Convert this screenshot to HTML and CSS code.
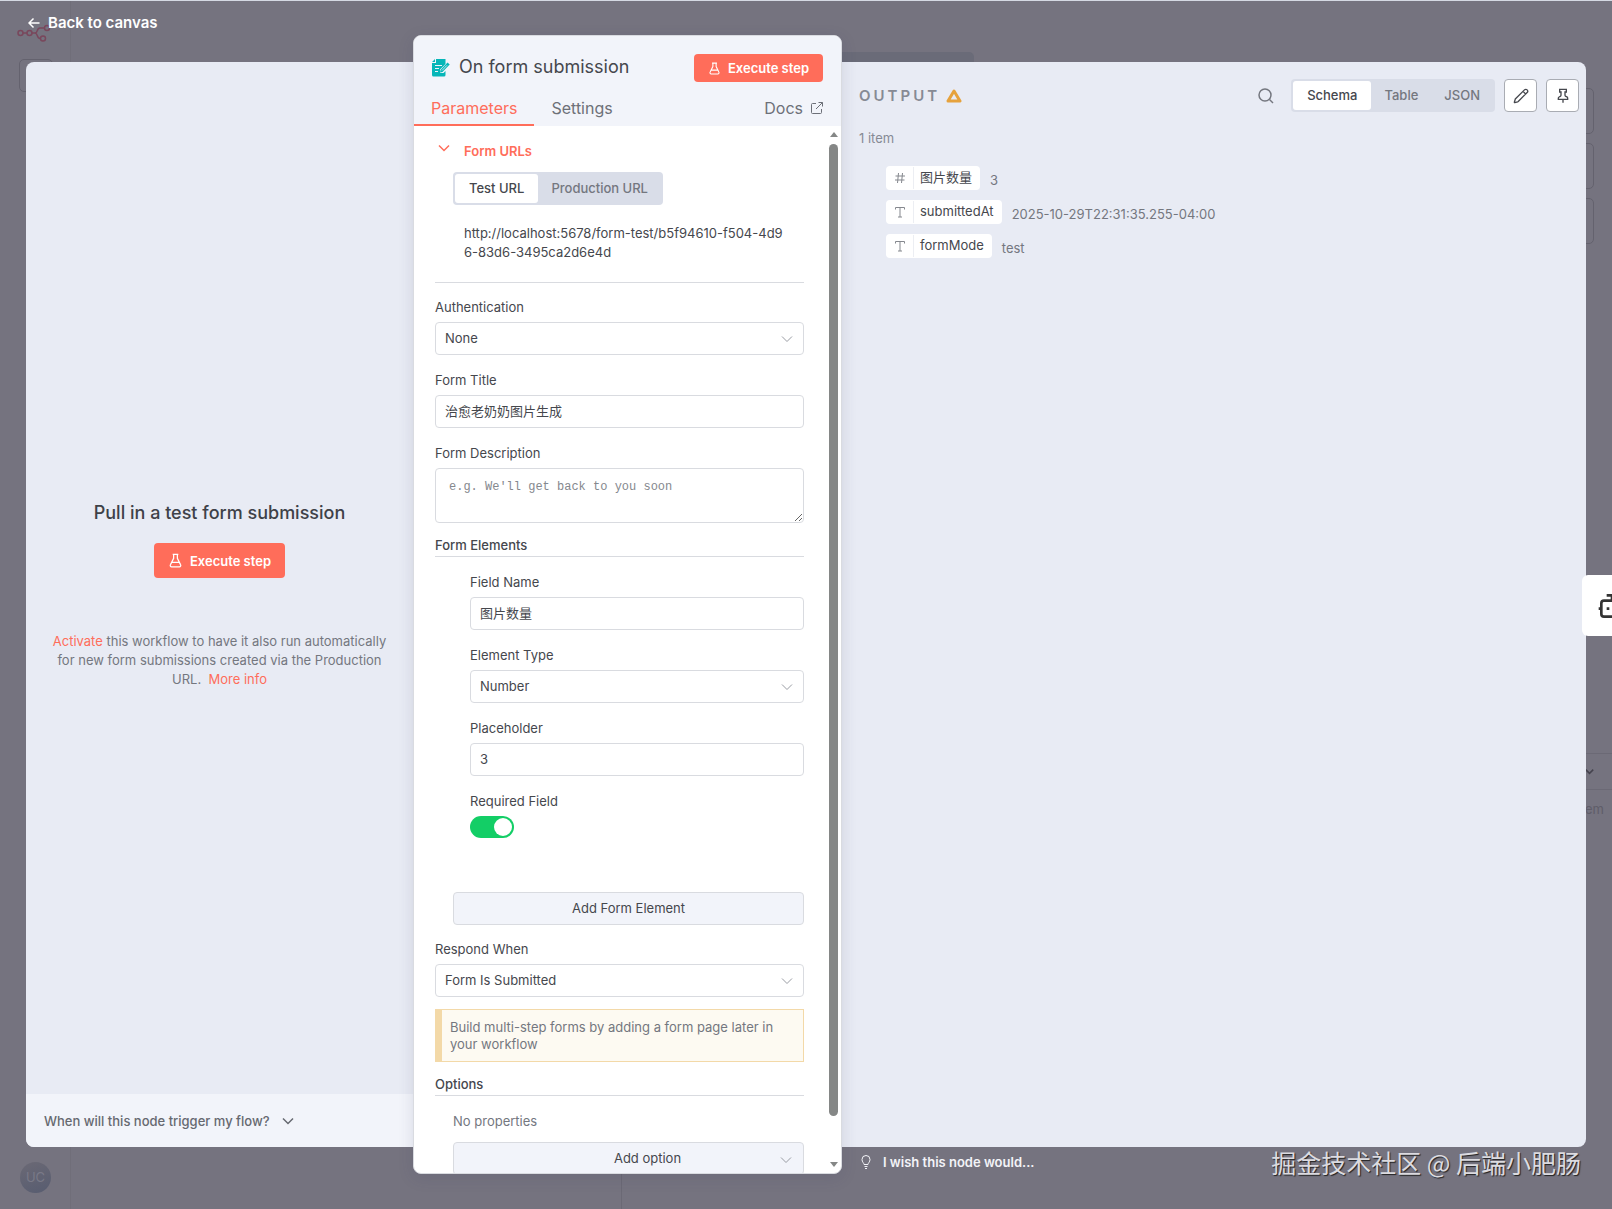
FILE: index.html
```html
<!DOCTYPE html>
<html lang="en">
<head>
<meta charset="utf-8">
<meta name="viewport" content="width=device-width, initial-scale=1">
<title>On form submission</title>
<link rel="stylesheet" href="styles.css">
</head>
<body>
<!-- Shared icon shapes -->
<svg class="sprite" aria-hidden="true">
  <symbol id="flask" viewBox="0 0 24 24"><path d="M9 2v6.500L4 18.500A2.200 2.200 0 0 0 6 22h12a2.200 2.200 0 0 0 2-3.500L15 8.500V2M7.500 2h9M6.500 15h11"/></symbol>
  <symbol id="chevron" viewBox="0 0 12 12"><path d="M1 3.500l5 5 5-5"/></symbol>
</svg>

<!-- Dimmed workflow canvas behind the dialog -->
<div class="canvas" aria-hidden="true">
  <div class="rail"></div>
  <svg class="logo" viewBox="0 0 34 18"><g fill="none" stroke="currentColor" stroke-width="1.500"><circle cx="3.500" cy="9" r="2.500"/><circle cx="12.500" cy="9" r="2.500"/><circle cx="30" cy="4" r="2.500"/><circle cx="26" cy="14.500" r="2.500"/><path d="M6 9h4M15 9h3c3 0 1.500-5 5-5h4.500M18 9c3 0 1.500 5.500 5 5.500"/></g></svg>
  <div class="box box-nav"></div>
  <div class="box box-tabs"></div>
  <div class="box box-a"></div>
  <div class="box box-b"></div>
  <div class="box box-c"></div>
  <div class="logs"><svg class="logs-tick" viewBox="0 0 12 12"><use href="#chevron"/></svg></div>
  <span class="logs-text">em</span>
  <div class="split"></div>
  <span class="avatar">UC</span>
</div>

<div class="stage">
  <header class="topbar">
    <a class="back" href="#"><svg viewBox="0 0 12 12"><path d="M11.500 6H1M5.500 1.500L1 6l4.500 4.500"/></svg>Back to canvas</a>
  </header>

  <section class="panel input-panel">
    <div class="empty">
      <h2 class="empty-title">Pull in a test form submission</h2>
      <button class="primary large" type="button"><svg><use href="#flask"/></svg>Execute step</button>
      <p class="empty-text"><a href="#">Activate</a> this workflow to have it also run automatically for new form submissions created via the Production URL.&nbsp; <a href="#">More info</a></p>
    </div>
    <button class="trigger-help" type="button">When will this node trigger my flow?<svg><use href="#chevron"/></svg></button>
  </section>

  <main class="card">
    <div class="card-head">
      <div class="title-row">
        <svg class="form-icon" viewBox="0 0 18 18"><path fill="#06b6b8" d="M4 0h9.500v5L8 10.500V14h3.500l2-2v4a1.500 1.500 0 0 1-1.500 1.500H1.500A1.500 1.500 0 0 1 0 16V4h4zM3 0v3H0z"/><path fill="none" stroke="#eef2fa" d="M3 6.500h7M3 9.500h4M3 12.500h3"/><path fill="#06b6b8" d="M15.500 3.500l2.200 2-7.200 7.500-2.500.6.500-2.600z"/><path fill="none" stroke="#eef2fa" stroke-width=".8" d="M10 11.500l5-5.200"/></svg>
        <h1 class="title">On form submission</h1>
        <button class="primary" type="button"><svg><use href="#flask"/></svg>Execute step</button>
      </div>
      <nav class="tabs">
        <a class="tab active" href="#">Parameters</a>
        <a class="tab" href="#">Settings</a>
        <a class="tab docs" href="#">Docs<svg viewBox="0 0 12 12"><path d="M5 1.500H1.500A1 1 0 0 0 .5 2.500v8a1 1 0 0 0 1 1h8a1 1 0 0 0 1-1V7M7.500.500h4v4M11.500.500L5 7"/></svg></a>
      </nav>
    </div>
    <div class="card-body">
      <form class="params">
        <button class="urls-title" type="button"><svg><use href="#chevron"/></svg>Form URLs</button>
        <div class="segmented urls-switch">
          <button class="seg on" type="button">Test URL</button>
          <button class="seg" type="button">Production URL</button>
        </div>
        <p class="url">http://localhost:5678/form-test/b5f94610-f504-4d96-83d6-3495ca2d6e4d</p>
        <hr class="rule">

        <div class="field">
          <label for="auth">Authentication</label>
          <div class="select"><select id="auth"><option>None</option></select><svg><use href="#chevron"/></svg></div>
        </div>
        <div class="field">
          <label for="form-title">Form Title</label>
          <input class="text" id="form-title" type="text" value="治愈老奶奶图片生成">
        </div>
        <div class="field">
          <label for="desc">Form Description</label>
          <textarea class="text area" id="desc" placeholder="e.g. We'll get back to you soon"></textarea>
        </div>

        <h3 class="group">Form Elements</h3>
        <div class="nested">
          <div class="field">
            <label for="name">Field Name</label>
            <input class="text" id="name" type="text" value="图片数量">
          </div>
          <div class="field">
            <label for="type">Element Type</label>
            <div class="select"><select id="type"><option>Number</option></select><svg><use href="#chevron"/></svg></div>
          </div>
          <div class="field">
            <label for="ph">Placeholder</label>
            <input class="text" id="ph" type="text" value="3">
          </div>
          <div class="field">
            <label for="req">Required Field</label>
            <input class="switch" id="req" type="checkbox" checked>
          </div>
        </div>
        <button class="add add-element" type="button">Add Form Element</button>

        <div class="field">
          <label for="respond">Respond When</label>
          <div class="select"><select id="respond"><option>Form Is Submitted</option></select><svg><use href="#chevron"/></svg></div>
        </div>
        <p class="notice">Build multi-step forms by adding a form page later in your workflow</p>

        <h3 class="group">Options</h3>
        <p class="none">No properties</p>
        <button class="add add-option" type="button">Add option<svg><use href="#chevron"/></svg></button>
      </form>
      <div class="scrollbar" aria-hidden="true"><i class="arrow up"></i><i class="thumb"></i><i class="arrow down"></i></div>
    </div>
  </main>

  <section class="panel output-panel">
    <div class="output-head">
      <h2 class="output-title">OUTPUT</h2>
      <svg class="warn" viewBox="0 0 16 14"><path d="M8 2l6 10H2z"/></svg>
      <button class="search" type="button" aria-label="Search"><svg viewBox="0 0 16 16"><circle cx="7" cy="7" r="6"/><path d="M11.500 11.500L15 15"/></svg></button>
      <div class="segmented">
        <button class="seg on" type="button">Schema</button>
        <button class="seg" type="button">Table</button>
        <button class="seg" type="button">JSON</button>
      </div>
      <button class="square" type="button" aria-label="Edit output"><svg viewBox="0 0 24 24"><path d="M21.200 6.800a2.800 2.800 0 0 0-4-4L3.800 16.200a2 2 0 0 0-.5.800L2 21.400a.5.500 0 0 0 .6.600L7 20.700a2 2 0 0 0 .8-.5zM15 5l4 4"/></svg></button>
      <button class="square" type="button" aria-label="Pin data"><svg viewBox="0 0 24 24"><path d="M12 17v5M9 10.800a2 2 0 0 1-1.100 1.800l-1.800.9A2 2 0 0 0 5 15.200V17h14v-1.800a2 2 0 0 0-1.100-1.800l-1.800-.9a2 2 0 0 1-1.100-1.700V6h2V2H7v4h2z"/></svg></button>
    </div>
    <p class="count">1 item</p>
    <ul class="schema">
      <li><span class="pill"><svg viewBox="0 0 12 12"><path d="M4.500 1l-1 10M8.500 1l-1 10M1.500 4h9.500M1 8h9.500"/></svg><span>图片数量</span></span><span class="value">3</span></li>
      <li><span class="pill"><svg viewBox="0 0 12 12"><path d="M1.500 3.500v-2h9v2M6 1.500v9.500M4 11h4"/></svg><span>submittedAt</span></span><span class="value">2025-10-29T22:31:35.255-04:00</span></li>
      <li><span class="pill"><svg viewBox="0 0 12 12"><path d="M1.500 3.500v-2h9v2M6 1.500v9.500M4 11h4"/></svg><span>formMode</span></span><span class="value">test</span></li>
    </ul>
  </section>

  <footer class="bottombar">
    <a class="wish" href="#"><svg viewBox="0 0 10 14"><path d="M3 9.500C3 8 1 7 1 4.500a4 4 0 0 1 8 0C9 7 7 8 7 9.500zM3.500 11.500h3M4 13.500h2"/></svg>I wish this node would...</a>
  </footer>
</div>

<button class="assistant" type="button" aria-label="Assistant"><svg viewBox="0 0 24 24"><path d="M12 8V4H8M2 14h2M20 14h2M15 13v2M9 13v2"/><rect x="4" y="8" width="16" height="12" rx="2"/></svg></button>
<p class="watermark">掘金技术社区 @ 后端小肥肠</p>
</body>
</html>
```
FILE: styles.css
```css
* { box-sizing: border-box; }

:root {
  --ink: #45474d;
  --muted: #74777f;
  --accent: #ff6d5a;
  --line: #d9dbe0;
  --panel: #e8ebf4;
  --soft: #f2f4fa;
}

body, h1, h2, h3, p, ul { margin: 0; padding: 0; }

body {
  height: 100vh;
  overflow: hidden;
  position: relative;
  border-top: 1px solid #d5d9e3;
  background: #75737f;
  color: var(--ink);
  font: 13px/18px Inter, "Noto Sans CJK SC", sans-serif;
}

a { color: var(--accent); text-decoration: none; }
button, input, select { font: inherit; color: inherit; }
button { border: 0; background: none; padding: 0; cursor: pointer; }
svg { fill: none; stroke: currentColor; flex: none; width: 12px; height: 12px; }
.sprite { position: absolute; width: 0; height: 0; }

/* Canvas behind the dialog */
.canvas { position: absolute; inset: 0; color: #5f5d69; }
.canvas > * { position: absolute; }
.rail { left: 0; top: 0; bottom: 0; width: 71px; border-right: 1px solid #706e79; }
.logo { left: 17px; top: 23px; width: 34px; height: 18px; color: #79475c; }
.box { border: 1px solid #64626e; border-radius: 5px; }
.box-nav { left: 19px; top: 58px; width: 34px; height: 33px; }
.box-tabs { left: 600px; top: 51px; width: 374px; height: 30px; background: #6a6b78; border: 0; }
.box-a, .box-b, .box-c { right: 18px; width: 60px; height: 46px; }
.box-a { top: 87px; }
.box-b { top: 142px; }
.box-c { top: 197px; }
.logs { right: 0; top: 752px; width: 40px; height: 37px; border: solid #6b6975; border-width: 1px 0; color: #45434e; }
.logs-tick { position: absolute; right: 18px; top: 13px; width: 9px; height: 9px; stroke-width: 2; }
.logs-text { right: 8px; top: 799px; }
.split { left: 621px; bottom: 0; width: 1px; height: 40px; background: #6b6975; }
.avatar { left: 20px; bottom: 16px; width: 31px; height: 31px; border-radius: 50%; background: linear-gradient(160deg, #6b6975, #575c70); color: #797987; text-align: center; line-height: 31px; }

/* Dialog frame */
.stage {
  position: relative;
  height: 100%;
  padding: 0 26px;
  display: grid;
  grid-template: 61px minmax(0, 1fr) 62px / minmax(0, 387fr) 429px minmax(0, 744fr);
}
.topbar { grid-column: 1 / -1; padding: 12px 2px; }
.back, .wish { display: inline-flex; align-items: center; color: #fff; font-weight: 600; }
.back { gap: 8px; font-size: 15px; line-height: 20px; }
.back svg { stroke-width: 1.5; }
.panel { background: var(--panel); min-width: 0; display: flex; flex-direction: column; }
.bottombar { grid-column: 3; padding: 6px 19px; }
.wish { gap: 12px; color: #f3f3f8; }
.wish svg { width: 10px; height: 14px; }

.primary {
  display: inline-flex;
  align-items: center;
  gap: 7px;
  height: 28px;
  padding: 0 14px;
  border-radius: 4px;
  background: var(--accent);
  color: #fff;
  font-weight: 600;
}
.primary svg { width: 13px; height: 13px; stroke-width: 2; }
.primary.large { height: 35px; }
.primary.large svg { width: 15px; height: 15px; }

/* Input panel */
.input-panel { border-radius: 8px 0 0 8px; overflow: hidden; }
.empty {
  flex: 1;
  padding: 34px 22px 0;
  display: flex;
  flex-direction: column;
  align-items: center;
  justify-content: center;
  color: var(--muted);
  text-align: center;
}
.empty-title { margin-bottom: 18px; color: #3e4148; font-size: 18px; line-height: 24px; font-weight: 500; }
.empty-text { margin-top: 54px; line-height: 19px; }
.trigger-help {
  height: 53px;
  padding: 0 18px;
  display: flex;
  align-items: center;
  gap: 12px;
  background: var(--soft);
  color: #666970;
  font-weight: 500;
}
.trigger-help svg { stroke-width: 1.5; }

/* Node card */
.card {
  z-index: 1;
  margin: -27px 0;
  display: flex;
  flex-direction: column;
  overflow: hidden;
  border: 1px solid var(--line);
  border-radius: 8px;
  background: #fff;
  box-shadow: 0 4px 16px rgba(60, 60, 90, .14);
}
.card-head { background: var(--soft); }
.title-row { display: flex; align-items: center; gap: 9px; padding: 18px 18px 0; }
.title { flex: 1; padding-bottom: 2px; font-size: 18px; line-height: 24px; font-weight: 400; }
.form-icon { width: 18px; height: 18px; stroke: none; }
.tabs { display: flex; margin-top: 8px; padding-right: 18px; }
.tab { height: 36px; padding: 8px 17px 0; color: #6d7078; font-size: 16px; line-height: 20px; font-weight: 400; }
.tab.active { border-bottom: 2px solid var(--accent); color: var(--accent); }
.docs { margin-left: auto; padding-right: 0; }
.docs svg { margin-left: 8px; }
.card-body { flex: 1; min-height: 0; display: flex; }
.params { flex: 1; min-width: 0; padding: 16px 22px 22px 21px; overflow-y: auto; scrollbar-width: none; }

.urls-title { display: flex; align-items: center; gap: 14px; padding-left: 3px; color: var(--accent); font-weight: 600; }
.urls-title svg { margin-bottom: 6px; stroke-width: 1.5; }
.segmented { display: inline-flex; height: 33px; padding: 2px; border-radius: 4px; background: #d9dde8; }
.seg { padding: 0 13px 1px; border-radius: 3px; color: var(--muted); font-weight: 500; }
.seg.on { padding: 0 14px 1px; background: #fff; color: var(--ink); }
.urls-switch { display: flex; width: max-content; margin: 12px 0 19px 18px; }
.url { padding: 0 18px 0 29px; line-height: 19px; word-break: break-all; }
.rule { margin: 20px 0 15px; border: 0; border-top: 1px solid var(--line); }

.field { display: flex; flex-direction: column; gap: 6px; }
.field + .field { margin-top: 16px; }
.text, select {
  width: 100%;
  height: 33px;
  padding: 0 9px 2px;
  border: 1px solid var(--line);
  border-radius: 4px;
  background: #fff;
  outline: 0;
}
select { appearance: none; }
.select { position: relative; }
.select svg, .add svg { position: absolute; right: 11px; top: 11px; color: #999ca3; }
.area { display: block; height: 55px; padding: 9px 13px; resize: vertical; font: 12px/18px "Liberation Mono", monospace; }
.area::placeholder { color: #85888e; }
.group { margin: 13px 0 16px; padding-bottom: 2px; border-bottom: 1px solid var(--line); font-size: 13px; font-weight: 500; }
.nested { padding-left: 35px; }
.switch { appearance: none; width: 44px; height: 22px; margin: 0; padding: 2px; border-radius: 11px; background: #13ce66; }
.switch::after { content: ""; display: block; width: 18px; height: 18px; margin-left: auto; border-radius: 50%; background: #fff; }
.add { position: relative; display: block; width: calc(100% - 18px); height: 33px; margin-left: 18px; padding-bottom: 2px; border: 1px solid var(--line); border-radius: 4px; background: var(--soft); }
.add-element { margin-top: 54px; margin-bottom: 15px; }
.add-option { margin-top: 12px; padding-left: 38px; }
.notice { margin-top: 12px; padding: 9px 8px 8px; border: 1px solid #f3d9a8; border-left-width: 7px; background: #fdfaf2; color: var(--muted); line-height: 17px; }
.none { padding-left: 18px; color: var(--muted); }

.scrollbar { width: 15px; padding: 6px 3px; display: flex; flex-direction: column; align-items: center; }
.arrow { border: 4px solid transparent; }
.up { border-bottom: 5px solid #858786; border-top: 0; margin: 0 0 7px; }
.down { border-top: 5px solid #858786; border-bottom: 0; }
.thumb { flex: 1; width: 9px; margin-bottom: 46px; border-radius: 5px; background: #858786; }

/* Output panel */
.output-panel { border-radius: 0 8px 8px 0; padding: 17px 7px 0 17px; }
.output-head { display: flex; align-items: center; }
.output-title { color: #868a94; font-size: 15px; line-height: 20px; font-weight: 600; letter-spacing: 3px; }
.warn { width: 16px; height: 14px; margin: 0 auto 0 6px; stroke: #e6a23c; stroke-width: 3; stroke-linejoin: round; }
.search { margin-right: 17px; color: var(--muted); display: flex; }
.search svg { width: 16px; height: 16px; stroke-width: 1.5; }
.square { width: 33px; height: 33px; margin-left: 9px; border: 1px solid #a9acb3; border-radius: 4px; background: #fff; display: grid; place-items: center; }
.square svg { width: 16px; height: 16px; stroke-width: 2; }
.count { margin-top: 17px; color: #868a94; }
.schema { margin: 19px 27px; list-style: none; display: grid; gap: 10px; }
.schema li { display: flex; align-items: center; gap: 10px; height: 24px; }
.pill { display: flex; align-items: center; height: 24px; border-radius: 4px; background: #fff; }
.pill svg { margin: 0 7px 0 8px; color: #85888e; }
.pill span { height: 22px; padding: 0 8px 0 6px; border-left: 1px solid #eceef3; line-height: 20px; }
.value { padding-top: 4px; color: var(--muted); }

.assistant { position: absolute; z-index: 2; right: 0; top: 574px; width: 30px; height: 61px; padding-left: 14px; overflow: hidden; display: flex; align-items: center; border-radius: 6px 0 0 6px; background: #fff; color: #333; }
.assistant svg { width: 32px; height: 32px; stroke-width: 2; }
.watermark { position: absolute; z-index: 2; right: 31px; bottom: 29px; color: #dcdbe0; font: 25px/36px "Noto Sans CJK SC", sans-serif; text-shadow: 1px 1px 1px #222; }
```
